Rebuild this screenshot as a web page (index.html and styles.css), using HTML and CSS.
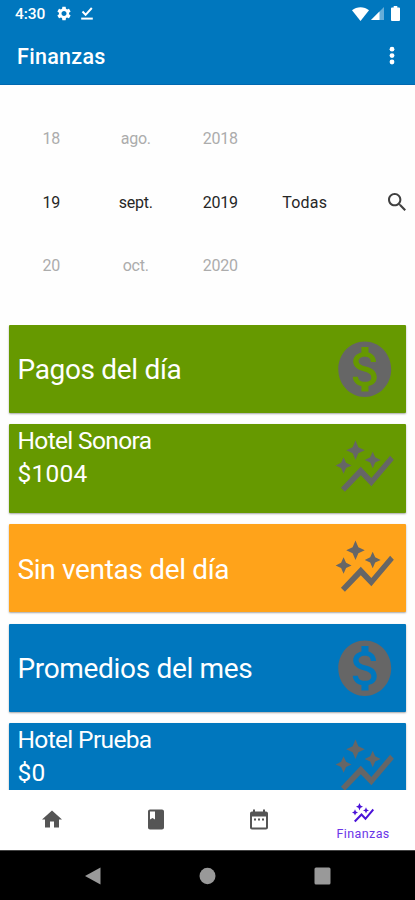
FILE: index.html
```
<!DOCTYPE html>
<html lang="es">
<head>
  <meta charset="UTF-8">
  <meta name="viewport" content="width=device-width, initial-scale=1.0">
  <title>Finanzas</title>
  <link rel="stylesheet" href="styles.css">
</head>
<body>
<svg class="sprite">
  <symbol id="graph" viewBox="0 0 24 24" preserveAspectRatio="none">
    <path d="M14.06 9.94 12 9l2.06-.94L15 6l.94 2.06L18 9l-2.06.94L15 12zM4 14l.94-2.06L7 11l-2.06-.94L4 8l-.94 2.06L1 11l2.06.94zm4.5-5 1.09-2.41L12 5.5 9.59 4.41 8.5 2 7.41 4.41 5 5.5l2.41 1.09zm-4 11.5 6-6.01 4 4L23 8.93l-1.41-1.41-7.09 7.97-4-4L3 19z"/>
  </symbol>
  <symbol id="money" viewBox="0 0 24 24" preserveAspectRatio="none">
    <path d="M12 2C6.48 2 2 6.48 2 12s4.48 10 10 10 10-4.480 10-10S17.520 2 12 2zm1.410 16.090V20h-2.670v-1.930c-1.710-.36-3.160-1.460-3.270-3.400h1.960c.1 1.050.82 1.870 2.650 1.870 1.960 0 2.400-.98 2.400-1.590 0-.83-.44-1.610-2.670-2.140-2.480-.6-4.180-1.620-4.180-3.670 0-1.720 1.390-2.840 3.110-3.210V4h2.670v1.950c1.860.45 2.790 1.860 2.850 3.390H14.300c-.05-1.110-.64-1.870-2.220-1.870-1.500 0-2.400.68-2.400 1.640 0 .84.65 1.390 2.670 1.910s4.180 1.390 4.180 3.910c-.01 1.830-1.380 2.830-3.120 3.160z"/>
  </symbol>
</svg>

<header class="header">
  <div class="status">
    <span class="clock">4:30</span>
    <svg class="gear" viewBox="2 2 20 20"><path d="M19.14 12.94c.04-.3.06-.61.06-.94 0-.32-.02-.64-.07-.94l2.03-1.58c.18-.14.23-.41.12-.61l-1.92-3.32c-.12-.22-.37-.29-.59-.22l-2.39.96c-.5-.38-1.03-.7-1.62-.94l-.36-2.54c-.04-.24-.24-.41-.48-.41h-3.84c-.24 0-.43.17-.47.41l-.36 2.54c-.59.24-1.13.57-1.62.94l-2.39-.96c-.22-.08-.47 0-.59.22L2.74 8.87c-.12.21-.08.47.12.61l2.03 1.58c-.05.3-.09.63-.09.94s.02.64.07.94l-2.03 1.58c-.18.14-.23.41-.12.61l1.92 3.32c.12.22.37.29.59.22l2.39-.96c.5.38 1.03.7 1.62.94l.36 2.54c.05.24.24.41.48.41h3.84c.24 0 .44-.17.47-.41l.36-2.54c.59-.24 1.13-.56 1.62-.94l2.39.96c.22.08.47 0 .59-.22l1.92-3.32c.12-.22.07-.47-.12-.61zM12 15.6c-1.98 0-3.6-1.62-3.6-3.6s1.62-3.6 3.6-3.6 3.6 1.62 3.6 3.6-1.62 3.6-3.6 3.6z"/></svg>
    <svg class="done" viewBox="0 0 12 13"><path d="M1.5 4.5 4.6 7.8 10.8 1" fill="none" stroke="#fff" stroke-width="2"/><path d="M.2 10.600h11.600v2H.2z"/></svg>
    <svg class="wifi" viewBox="0 0 17 14"><path d="M0 3.2C4.8-.9 12.2-.9 17 3.2L8.5 14z"/></svg>
    <svg class="signal" viewBox="0 0 13 13"><path d="M0 13 13 0v13z" opacity=".4"/><path d="M0 13 8.5 4.5V13z"/></svg>
    <svg class="battery" viewBox="0 0 9 15"><path d="M2.7 0h3.6v1.5H8a1 1 0 0 1 1 1V14a1 1 0 0 1-1 1H1a1 1 0 0 1-1-1V2.5a1 1 0 0 1 1-1h1.7z"/></svg>
  </div>
  <div class="toolbar">
    <h1>Finanzas</h1>
    <svg class="more" viewBox="0 0 6 20"><circle cx="3" cy="3.2" r="2.4"/><circle cx="3" cy="9.6" r="2.4"/><circle cx="3" cy="16" r="2.4"/></svg>
  </div>
</header>

<section class="filters">
  <div class="picker"><span>18</span><span class="current">19</span><span>20</span></div>
  <div class="picker"><span>ago.</span><span class="current">sept.</span><span>oct.</span></div>
  <div class="picker"><span>2018</span><span class="current">2019</span><span>2020</span></div>
  <div class="picker type"><span class="current">Todas</span></div>
  <svg class="search" viewBox="3 3 17.5 17.5"><path d="M15.5 14h-.79l-.28-.27C15.41 12.59 16 11.11 16 9.5 16 5.91 13.09 3 9.5 3S3 5.91 3 9.5 5.91 16 9.5 16c1.61 0 3.09-.59 4.23-1.57l.27.28v.79l5 4.99L20.49 19l-4.99-5zm-6 0C7.01 14 5 11.99 5 9.5S7.01 5 9.5 5 14 7.01 14 9.5 11.99 14 9.5 14z"/></svg>
</section>

<main class="list">
  <div class="card green">
    <p class="title">Pagos del día</p>
    <svg><use href="#money"/></svg>
  </div>
  <div class="card green">
    <div class="detail"><p class="name">Hotel Sonora</p><p>$1004</p></div>
    <svg><use href="#graph"/></svg>
  </div>
  <div class="card orange">
    <p class="title">Sin ventas del día</p>
    <svg><use href="#graph"/></svg>
  </div>
  <div class="card blue">
    <p class="title">Promedios del mes</p>
    <svg><use href="#money"/></svg>
  </div>
  <div class="card blue">
    <div class="detail"><p class="name">Hotel Prueba</p><p>$0</p></div>
    <svg><use href="#graph"/></svg>
  </div>
</main>

<nav class="tabs">
  <a class="tab"><svg viewBox="0 0 24 24"><path d="M10 20v-6h4v6h5v-8h3L12 3 2 12h3v8z"/></svg></a>
  <a class="tab"><svg viewBox="0 0 24 24"><path d="M18 2H6c-1.1 0-2 .9-2 2v16c0 1.1.9 2 2 2h12c1.1 0 2-.9 2-2V4c0-1.1-.9-2-2-2zM6 4h5v8l-2.5-1.5L6 12V4z"/></svg></a>
  <a class="tab"><svg viewBox="0 0 24 24"><path d="M9 11H7v2h2v-2zm4 0h-2v2h2v-2zm4 0h-2v2h2v-2zm2-7h-1V2h-2v2H8V2H6v2H5c-1.11 0-1.99.9-1.99 2L3 20c0 1.1.89 2 2 2h14c1.1 0 2-.9 2-2V6c0-1.1-.9-2-2-2zm0 16H5V9h14v11z"/></svg></a>
  <a class="tab active"><svg><use href="#graph"/></svg><span>Finanzas</span></a>
</nav>

<footer class="system">
  <svg viewBox="0 0 16 18"><path d="M.5 9 16 .5v17z"/></svg>
  <svg viewBox="0 0 16 18"><ellipse cx="8" cy="9" rx="8" ry="8.2"/></svg>
  <svg viewBox="0 0 16 18"><rect y=".5" width="16" height="17" rx="1.5"/></svg>
</footer>
</body>
</html>
```

FILE: styles.css
```
* {
    box-sizing: border-box;
}
body {
    margin: 0;
    height: 900px;
    display: flex;
    flex-direction: column;
    overflow: hidden;
    background-color: #fefefe;
    font-family: Roboto, sans-serif;
}
h1, p {
    margin: 0;
    font-weight: normal;
}
svg {
    display: block;
    flex: none;
}
.sprite {
    display: none;
}
.header {
    height: 85px;
    flex: none;
    background-color: #0077be;
    border-bottom: 1px solid #0068b0;
    color: #fff;
    fill: #fff;
}
.status {
    height: 27px;
    display: flex;
    align-items: center;
    padding: 0 15px;
}
.clock {
    width: 42px;
    font-size: 15.5px;
    font-weight: 500;
    letter-spacing: -0.1px;
}
.gear {
    width: 14px;
    height: 15px;
}
.done {
    width: 12px;
    height: 13px;
    margin-left: 10px;
}
.wifi {
    width: 17px;
    height: 14px;
    margin-left: auto;
}
.signal {
    width: 13px;
    height: 13px;
    margin-left: 2px;
}
.battery {
    width: 9px;
    height: 15px;
    margin-left: 7px;
}
.toolbar {
    height: 58px;
    display: flex;
    align-items: center;
    justify-content: space-between;
    padding: 0 20px 0 17px;
}
.toolbar h1 {
    font-size: 21.5px;
    font-weight: 500;
    letter-spacing: 0.3px;
}
.more {
    width: 6px;
    height: 20px;
}
.filters {
    height: 239.5px;
    flex: none;
    display: flex;
    align-items: center;
    padding: 0 9px;
}
.picker {
    width: 84.5px;
    margin-bottom: 5px;
    display: flex;
    flex-direction: column;
    text-align: center;
    font-size: 16px;
    line-height: 63.5px;
    letter-spacing: -0.2px;
    color: #acacac;
}
.picker .current {
    color: #262626;
}
.picker.type {
    letter-spacing: 0.2px;
}
.search {
    width: 18px;
    height: 18px;
    margin: 0 0 6px auto;
    fill: #404040;
}
.list {
    flex: 1;
    min-height: 0;
    overflow: hidden;
    padding: 0 9px;
}
.card {
    height: 88.5px;
    margin-bottom: 11.2px;
    padding: 0 9.5px 0 8.5px;
    display: flex;
    align-items: center;
    justify-content: space-between;
    border-radius: 1px;
    box-shadow: 0 1px 2px rgba(0,0,0,0.35);
    color: #fff;
}
.card svg {
    width: 63.5px;
    height: 66.5px;
    fill: #666;
}
.green {
    background-color: #669900;
}
.orange {
    background-color: #ffa31a;
}
.blue {
    background-color: #0077be;
}
.title {
    padding-top: 3px;
    font-size: 28px;
    line-height: 34px;
    letter-spacing: -0.33px;
}
.detail {
    align-self: flex-start;
    font-size: 24.5px;
    line-height: 33px;
    letter-spacing: 0.2px;
}
.detail .name {
    letter-spacing: -0.65px;
}
.tabs {
    height: 60px;
    flex: none;
    display: flex;
    background-color: #fff;
}
.tab {
    width: 25%;
    padding-bottom: 1px;
    display: flex;
    flex-direction: column;
    align-items: center;
    justify-content: center;
    fill: #555;
}
.tab svg {
    width: 24px;
    height: 25px;
}
.tab.active {
    padding: 2px 0 0;
    color: #6a35e8;
    fill: #4a12d8;
    font-size: 12.5px;
    line-height: 15px;
    letter-spacing: 0.4px;
}
.system {
    height: 50px;
    flex: none;
    display: flex;
    align-items: center;
    justify-content: center;
    gap: 98px;
    background-color: #000;
    border-top: 1px solid #444;
    fill: #999;
}
.system svg {
    width: 17px;
    height: 18px;
}
```
